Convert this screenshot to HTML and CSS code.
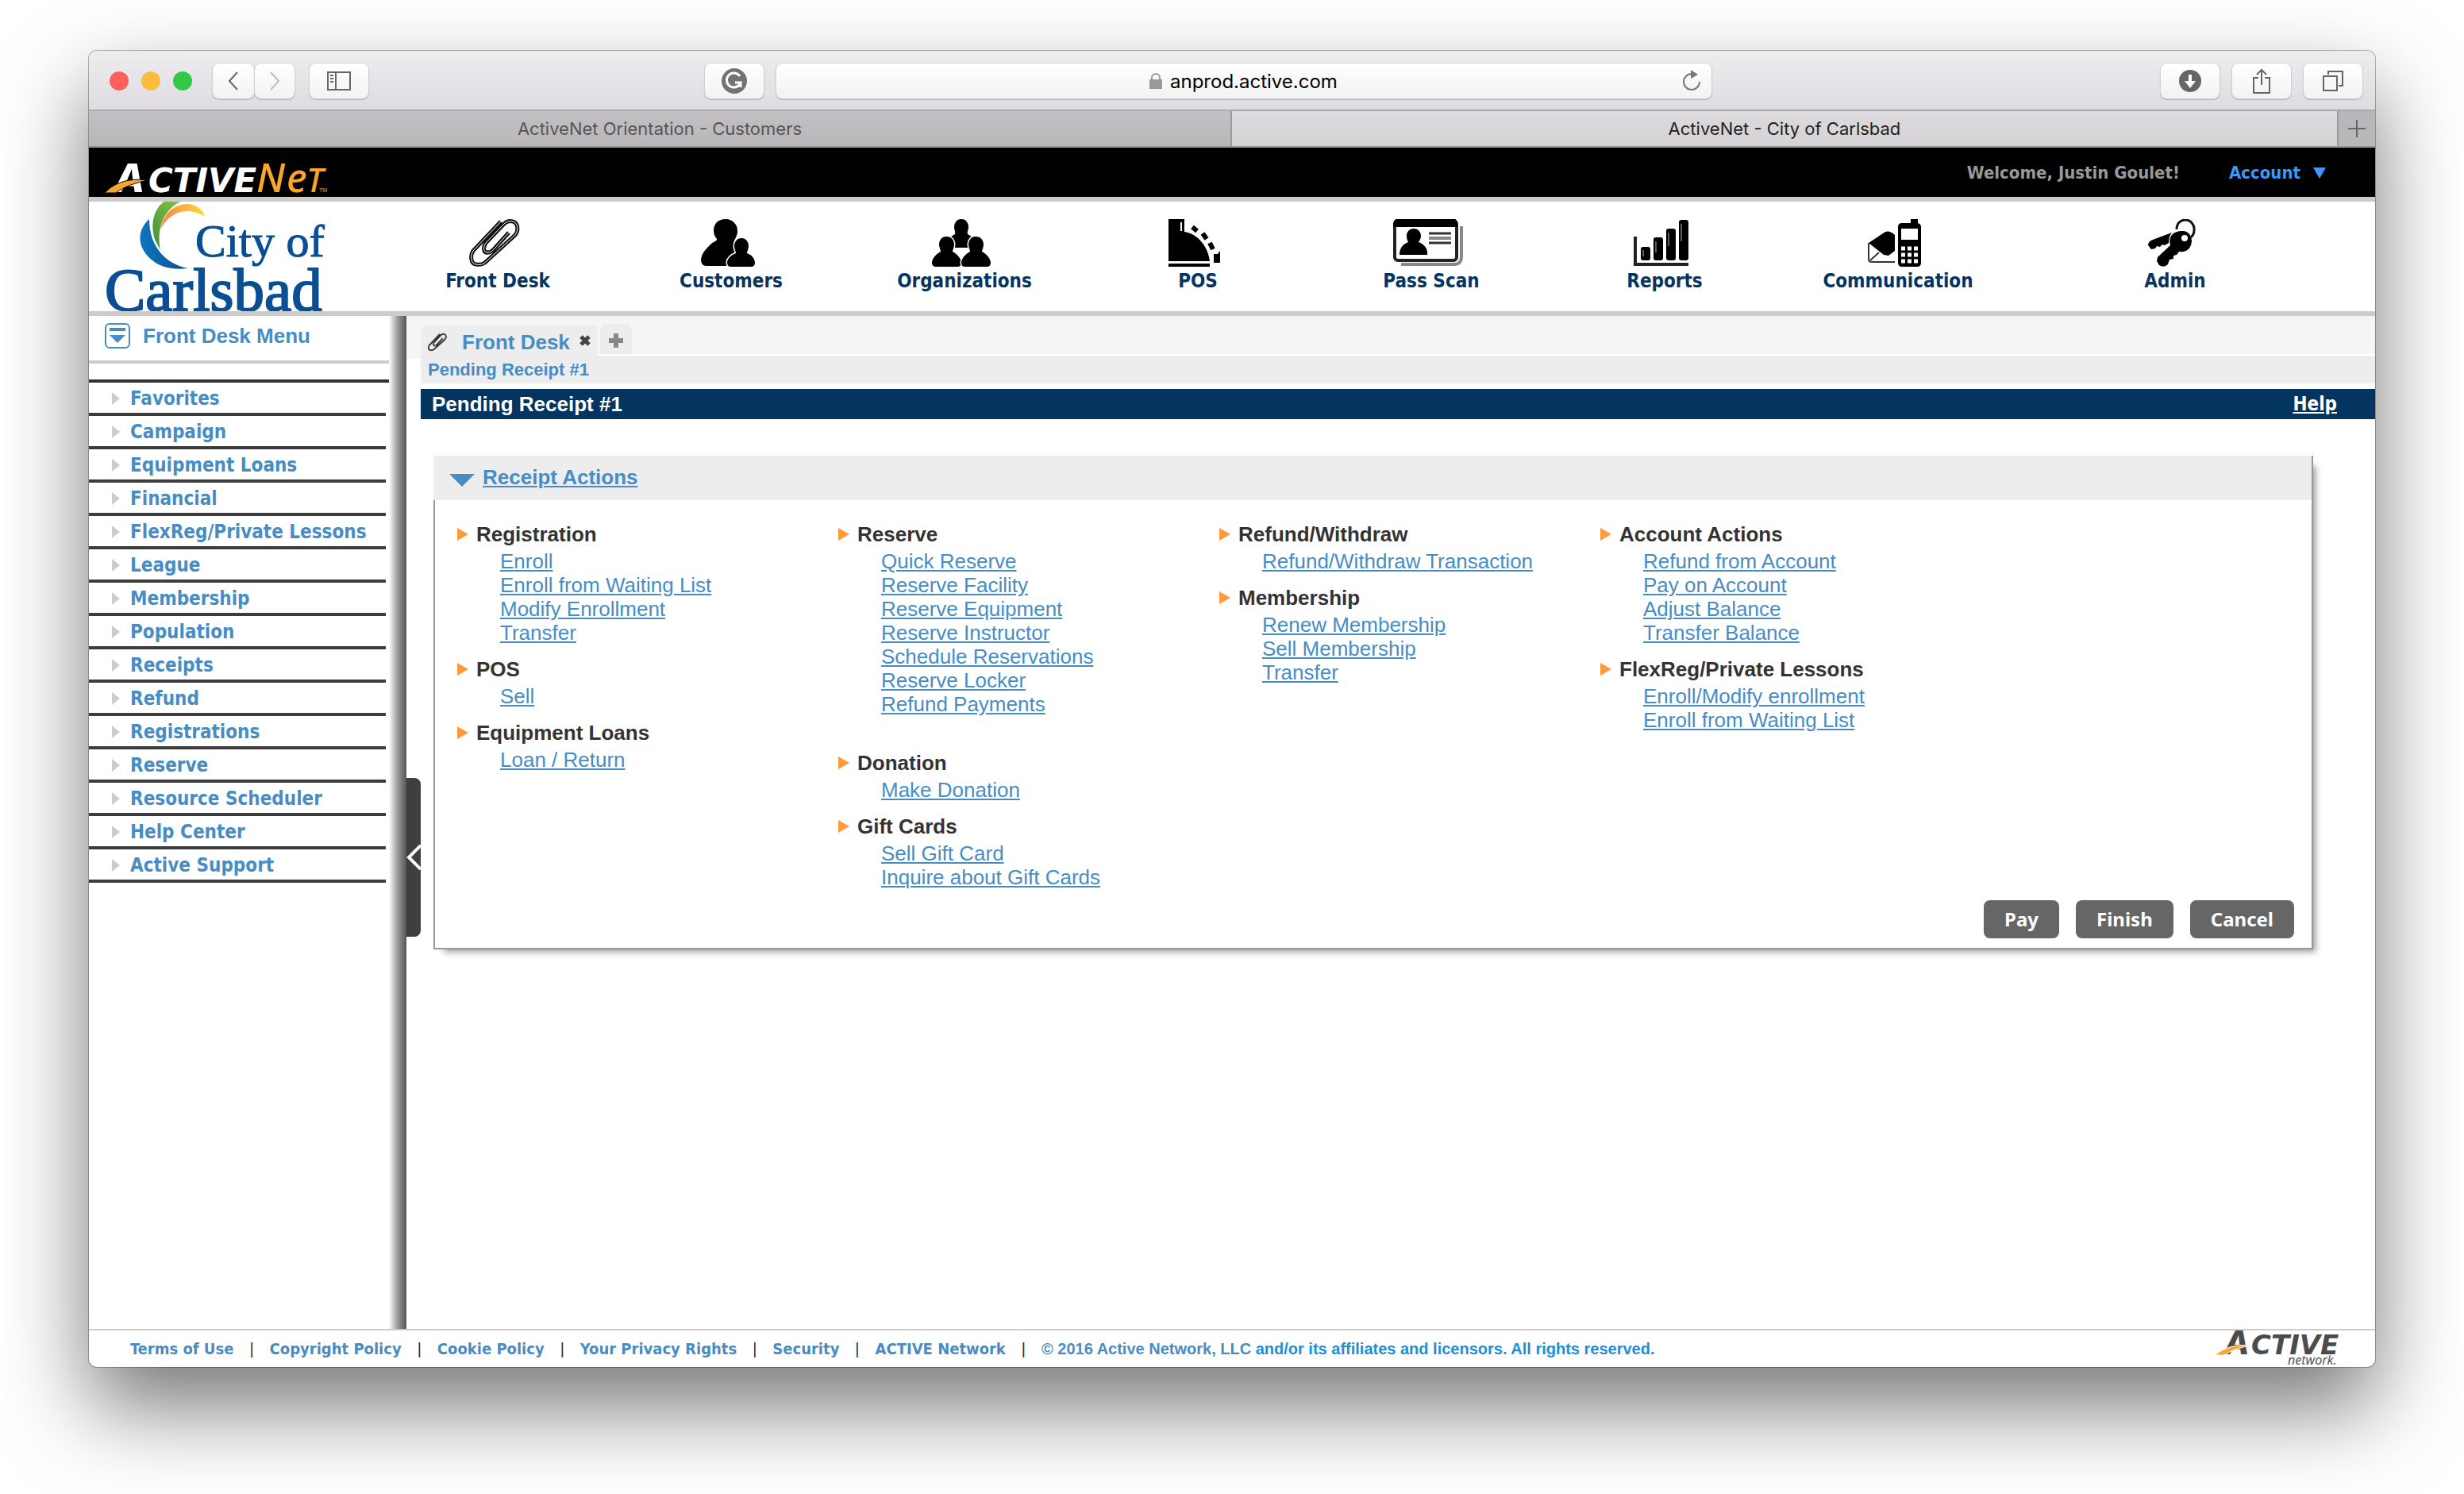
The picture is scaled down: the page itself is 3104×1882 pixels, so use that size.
FILE: index.html
```
<!DOCTYPE html>
<html lang="en">
<head>
<meta charset="utf-8">
<title>ActiveNet - City of Carlsbad</title>
<link rel="stylesheet" href="styles.css">
</head>
<body>
<svg class="defs" aria-hidden="true">
  <symbol id="clip" viewBox="0 0 64 60">
    <path d="M40 3 L5 40 C1 46 2 57 9 57 C15 58 18 57 22 53 L58 20 C63 14 61 4 55 3 C51 2 47 3 44 6 L21 30 C17 36 18 43 24 42 C27 42 29 40 31 38 L50 17" fill="none" stroke="#111" stroke-width="5"/>
    <path d="M40 3 L5 40 C1 46 2 57 9 57 C15 58 18 57 22 53 L58 20 C63 14 61 4 55 3 C51 2 47 3 44 6 L21 30 C17 36 18 43 24 42 C27 42 29 40 31 38 L50 17" fill="none" stroke="#fff" stroke-width="1"/>
  </symbol>
</svg>
<div class="window">
  <div class="toolbar">
    <div class="lights"><span class="light red"></span><span class="light amber"></span><span class="light green"></span></div>
    <div class="pair">
      <button class="tool back" aria-label="Back"><svg width="16" height="26" viewBox="0 0 16 26"><path d="M13 2 L3 13 L13 24" fill="none" stroke="#666" stroke-width="2"/></svg></button>
      <button class="tool fwd" aria-label="Forward"><svg width="16" height="26" viewBox="0 0 16 26"><path d="M3 2 L13 13 L3 24" fill="none" stroke="#bbb" stroke-width="2"/></svg></button>
    </div>
    <button class="tool wide" aria-label="Sidebar"><svg width="30" height="24" viewBox="0 0 30 24"><path d="M1 1H29V23H1ZM11 1V23M4 5H8M4 9H8M4 13H8" fill="none" stroke="#666" stroke-width="2"/></svg></button>
    <span class="space-left"></span>
    <button class="tool wide" aria-label="Extension"><svg width="32" height="32" viewBox="0 0 32 32"><circle cx="16" cy="16" r="16" fill="#737373"/><path d="M23 10 A9 9 0 1 0 24 18 H17 M24 18 V24" fill="none" stroke="#fff" stroke-width="3"/></svg></button>
    <div class="address">
      <svg width="16" height="20" viewBox="0 0 16 20"><path d="M0 8H16V20H0Z" fill="#999"/><path d="M3 9V6A5 5 0 0 1 13 6V9" fill="none" stroke="#999" stroke-width="2"/></svg>
      <input class="url" type="text" value="anprod.active.com" aria-label="Address">
      <button class="reload" aria-label="Reload"><svg width="26" height="28" viewBox="0 0 26 28"><path d="M13 5 A10 10 0 1 0 23 15" fill="none" stroke="#777" stroke-width="2"/><path d="M12 0 L21 6 L12 11Z" fill="#777"/></svg></button>
    </div>
    <span class="space-right"></span>
    <div class="tools">
      <button class="tool wide" aria-label="Downloads"><svg width="28" height="28" viewBox="0 0 28 28"><circle cx="14" cy="14" r="14" fill="#666"/><path d="M12 6H16V14H21L14 23L7 14H12Z" fill="#fff"/></svg></button>
      <button class="tool wide" aria-label="Share"><svg width="24" height="32" viewBox="0 0 24 32"><path d="M8 12H2V31H22V12H16M12 21V3M6 8L12 2L18 8" fill="none" stroke="#666" stroke-width="2"/></svg></button>
      <button class="tool wide" aria-label="Show all tabs"><svg width="26" height="26" viewBox="0 0 26 26"><path d="M1 7H18V25H1ZM7 5V1H25V19H20" fill="none" stroke="#666" stroke-width="2"/></svg></button>
    </div>
  </div>
  <div class="tabs">
    <button class="tab">ActiveNet Orientation - Customers</button>
    <button class="tab current">ActiveNet - City of Carlsbad</button>
    <button class="tab-add" aria-label="New tab"><svg width="22" height="22" viewBox="0 0 22 22"><path d="M11 0V22M0 11H22" stroke="#666" stroke-width="2"/></svg></button>
  </div>

  <header class="topbar">
    <svg class="brand" width="284" height="42" viewBox="0 0 284 42" role="img" aria-label="ActiveNet">
      <text x="12" y="39" class="brand-a">A</text>
      <text x="55" y="39" class="brand-bold">CTIVE</text>
      <text x="191" y="39" class="brand-net">N</text>
      <text x="229" y="39" class="brand-net">e</text>
      <text x="254" y="39" class="brand-t">T</text>
      <text x="270" y="39" class="brand-tm">TM</text>
      <path d="M0 40 C12 27 30 21 54 24 C40 27 24 32 14 40Z" fill="#f9a62b" stroke="#000" stroke-width="1"/>
    </svg>
    <span class="welcome">Welcome, Justin Goulet!</span>
    <a class="account" href="#">Account <svg width="16" height="14" viewBox="0 0 16 14"><path d="M0 0H16L8 14Z" fill="#3b99fc"/></svg></a>
  </header>

  <div class="mainnav">
    <svg class="city" width="278" height="138" viewBox="0 0 278 138" role="img" aria-label="City of Carlsbad">
      <defs>
        <linearGradient id="g1"><stop offset="0" stop-color="#0f75bd"/><stop offset="1" stop-color="#0a4f93"/></linearGradient>
        <linearGradient id="g2" x1="1" y1="0" x2="0" y2="1"><stop offset="0" stop-color="#86c34a"/><stop offset="1" stop-color="#3f9038"/></linearGradient>
        <linearGradient id="g3"><stop offset="0" stop-color="#f58450"/><stop offset="1" stop-color="#fddb2e"/></linearGradient>
      </defs>
      <path d="M56 22 C40 36 40 58 60 74 C72 84 88 86 105 84 C78 79 56 58 56 22Z" fill="url(#g1)"/>
      <path d="M75 0 C60 10 57 32 64 50 L70 61 C66 38 70 14 95 0Z" fill="url(#g2)"/>
      <path d="M70 35 C74 14 88 3 105 3 C116 4 124 10 126 19 C116 12 104 11 96 13 C84 16 76 24 70 35Z" fill="url(#g3)"/>
      <text x="114" y="69" class="city-of">City of</text>
      <text x="0" y="137" class="carlsbad">Carlsbad</text>
    </svg>
    <nav class="modules">
      <a class="module" href="#"><svg width="64" height="60"><use href="#clip"/></svg>Front Desk</a>
      <a class="module" href="#"><svg width="68" height="60" viewBox="0 0 68 60"><path d="M31 0C41 0 47 8 46 17C45 23 42 26 41 30C52 34 58 44 58 52V56Q58 59 53 59H6Q0 58 0 51C1 42 8 36 13 31C17 28 21 27 20 25C17 22 16 18 16 13C17 5 22 0 31 0Z"/><path d="M51 24C57 24 60 29 60 34C60 38 58 40 58 43C64 45 68 50 68 55Q68 60 63 60H38Q33 60 33 55C33 50 38 45 44 43C44 40 42 38 42 34C42 29 45 24 51 24Z" stroke="#fff" stroke-width="3" paint-order="stroke"/></svg>Customers</a>
      <a class="module" href="#"><svg width="74" height="60" viewBox="0 0 74 60"><path d="M37 0C43 0 46 5 46 10C46 14 44 16 45 19L50 22V36H24V22L29 19C30 16 28 14 28 10C28 5 31 0 37 0Z"/><g stroke="#fff" stroke-width="3" paint-order="stroke"><path id="p" d="M18 22C25 22 28 27 28 32C28 36 26 38 26 41C32 44 37 50 37 55Q37 60 32 60H5Q0 60 0 55C0 50 5 44 11 41C11 38 9 36 9 32C9 27 12 22 18 22Z"/><use href="#p" x="37"/></g></svg>Organizations</a>
      <a class="module" href="#"><svg width="66" height="60" viewBox="0 0 66 60"><path d="M0 0H20V16C36 18 50 34 52 53H0ZM0 56H52V60H0ZM57 44H62L65 40V55H57Z"/><path d="M16 4V15" stroke="#fff" stroke-width="2"/><path d="M30 10L36 15M43 18L48 25M52 30L56 38" stroke="#000" stroke-width="6"/></svg>POS</a>
      <a class="module" href="#"><svg width="88" height="60" viewBox="0 0 88 60"><path d="M10 57H78Q86 56 86 48V9" fill="none" stroke="#888" stroke-width="4"/><rect x="2" y="2" width="78" height="50" rx="4" fill="#fff" stroke="#222" stroke-width="4"/><path d="M4 0H78Q81 1 81 10H0Q0 0 4 0ZM26 12C32 12 35 17 35 21C35 25 33 27 32 29C40 32 44 38 43 45H8C8 38 11 32 19 29C18 27 17 25 17 21C17 17 20 12 26 12Z"/><path d="M45 18H73M45 30H73" stroke="#333" stroke-width="3"/><path d="M45 24H73" stroke="#888" stroke-width="4"/></svg>Pass Scan</a>
      <a class="module" href="#"><svg width="70" height="60" viewBox="0 0 70 60"><path d="M2 22V57H69" fill="none" stroke="#222" stroke-width="4"/><rect x="9" y="35" width="12" height="17" rx="3"/><rect x="25" y="23" width="12" height="29" rx="3"/><rect x="41" y="12" width="12" height="40" rx="3"/><rect x="57" y="1" width="12" height="51" rx="3"/><path d="M12 39V47M28 28V42M44 17V34M60 6V28" stroke="#bbb" stroke-width="1"/></svg>Reports</a>
      <a class="module" href="#"><svg width="68" height="60" viewBox="0 0 68 60"><path d="M1 30L22 16Q28 14 34 20V40L26 46L20 45Z"/><path d="M1 30V51Q1 54 5 54H34M3 52L14 42" fill="none" stroke="#333" stroke-width="2"/><path d="M54 0H63V5Q67 6 67 10V55Q67 60 62 60H43Q38 60 38 55V10Q38 5 43 5H54Z"/><path d="M42 12H63V26H42Z" fill="#fff"/><path d="M42 37H64M42 45H64M42 53H64" stroke="#fff" stroke-width="5" stroke-dasharray="5 3"/></svg>Communication</a>
      <a class="module" href="#"><svg width="60" height="60" viewBox="0 0 60 60"><path d="M36 13C36 5 41 1 47 1C54 1 59 8 58 14C58 18 56 22 52 24" fill="none" stroke="#111" stroke-width="3"/><path d="M42 15C50 14 55 20 55 28C54 37 49 42 39 41L36 45L32 46V50L27 51L25 57Q20 62 14 58L11 53L12 48L28 33C25 22 32 15 42 15ZM30 17L6 26Q0 28 0 33L4 38L9 37L11 34L15 35L18 32L21 33L26 30Q26 22 30 17Z"/><circle cx="46" cy="24" r="4" fill="#fff"/></svg>Admin</a>
    </nav>
  </div>

  <div class="content">
    <aside class="sidebar">
      <h2 class="menu-title"><svg width="32" height="32" viewBox="0 0 32 32"><rect x="1" y="1" width="30" height="30" rx="5" fill="#fff" stroke="#478dc4" stroke-width="2"/><path d="M6 6H26V10H6ZM6 15H26L16 25Z" fill="#478dc4"/></svg>Front Desk Menu</h2>
      <ul class="menu">
        <li><a href="#">Favorites</a></li>
        <li><a href="#">Campaign</a></li>
        <li><a href="#">Equipment Loans</a></li>
        <li><a href="#">Financial</a></li>
        <li><a href="#">FlexReg/Private Lessons</a></li>
        <li><a href="#">League</a></li>
        <li><a href="#">Membership</a></li>
        <li><a href="#">Population</a></li>
        <li><a href="#">Receipts</a></li>
        <li><a href="#">Refund</a></li>
        <li><a href="#">Registrations</a></li>
        <li><a href="#">Reserve</a></li>
        <li><a href="#">Resource Scheduler</a></li>
        <li><a href="#">Help Center</a></li>
        <li><a href="#">Active Support</a></li>
      </ul>
    </aside>
    <div class="divider"></div>
    <main class="workspace">
      <button class="collapse" aria-label="Collapse menu"><svg width="18" height="32" viewBox="0 0 18 32"><path d="M18 1L3 16L18 31" fill="none" stroke="#fff" stroke-width="4"/></svg></button>
      <div class="worktabs">
        <div class="worktab"><svg width="24" height="24"><use href="#clip"/></svg><a href="#">Front Desk</a><button class="close" aria-label="Close tab"><svg width="14" height="14" viewBox="0 0 14 14"><path d="M2 2L12 12M12 2L2 12" stroke="#444" stroke-width="5"/></svg></button></div>
        <button class="worktab-add" aria-label="Add tab"><svg width="18" height="18" viewBox="0 0 18 18"><path d="M9 0V18M0 9H18" stroke="#888" stroke-width="6"/></svg></button>
      </div>
      <div class="crumb"><a href="#">Pending Receipt #1</a></div>
      <div class="titlebar"><h1>Pending Receipt #1</h1><a class="help" href="#">Help</a></div>
      <section class="panel">
        <div class="panel-head"><svg width="32" height="16" viewBox="0 0 32 16"><path d="M0 0H32L16 16Z" fill="#478dc4"/></svg><a href="#">Receipt Actions</a></div>
        <div class="columns">
          <div class="column">
            <div class="group"><h3>Registration</h3><a href="#">Enroll</a><a href="#">Enroll from Waiting List</a><a href="#">Modify Enrollment</a><a href="#">Transfer</a></div>
            <div class="group"><h3>POS</h3><a href="#">Sell</a></div>
            <div class="group"><h3>Equipment Loans</h3><a href="#">Loan / Return</a></div>
          </div>
          <div class="column">
            <div class="group spaced"><h3>Reserve</h3><a href="#">Quick Reserve</a><a href="#">Reserve Facility</a><a href="#">Reserve Equipment</a><a href="#">Reserve Instructor</a><a href="#">Schedule Reservations</a><a href="#">Reserve Locker</a><a href="#">Refund Payments</a></div>
            <div class="group"><h3>Donation</h3><a href="#">Make Donation</a></div>
            <div class="group"><h3>Gift Cards</h3><a href="#">Sell Gift Card</a><a href="#">Inquire about Gift Cards</a></div>
          </div>
          <div class="column">
            <div class="group"><h3>Refund/Withdraw</h3><a href="#">Refund/Withdraw Transaction</a></div>
            <div class="group"><h3>Membership</h3><a href="#">Renew Membership</a><a href="#">Sell Membership</a><a href="#">Transfer</a></div>
          </div>
          <div class="column">
            <div class="group"><h3>Account Actions</h3><a href="#">Refund from Account</a><a href="#">Pay on Account</a><a href="#">Adjust Balance</a><a href="#">Transfer Balance</a></div>
            <div class="group"><h3>FlexReg/Private Lessons</h3><a href="#">Enroll/Modify enrollment</a><a href="#">Enroll from Waiting List</a></div>
          </div>
        </div>
        <div class="actions"><button class="action">Pay</button><button class="action">Finish</button><button class="action">Cancel</button></div>
      </section>
    </main>
  </div>

  <footer class="footer">
    <nav class="legal">
      <a href="#">Terms of Use</a><span>|</span><a href="#">Copyright Policy</a><span>|</span><a href="#">Cookie Policy</a><span>|</span><a href="#">Your Privacy Rights</a><span>|</span><a href="#">Security</a><span>|</span><a href="#">ACTIVE Network</a><span>|</span>
      <p class="copy"><a href="#">© 2016 Active Network, LLC</a> and/or its affiliates and licensors. All rights reserved.</p>
    </nav>
    <svg width="160" height="46" viewBox="0 0 160 46" role="img" aria-label="Active network">
      <text x="12" y="30" class="foot-a">A</text>
      <text x="46" y="30" class="foot-bold">CTIVE</text>
      <text x="92" y="43" class="foot-net">network.</text>
      <path d="M0 31 C12 22 26 17 44 19 C30 22 20 26 12 31Z" fill="#f9a62b" stroke="#fff" stroke-width="1"/>
    </svg>
  </footer>
</div>
</body>
</html>
```
FILE: styles.css
```
* { box-sizing: border-box; }
body {
  margin: 0;
  min-height: 100vh;
  padding: 64px 112px 160px;
  background: #fff;
  font: 26px/30px "Liberation Sans", Arial, sans-serif;
  color: #333;
  display: flex;
}
h1, h2, h3, p, ul { margin: 0; padding: 0; font-size: inherit; font-weight: inherit; }
a { color: #478dc4; }
button { margin: 0; padding: 0; border: 0; background: none; font: inherit; color: inherit; }
svg { display: block; flex: none; }
.defs { position: absolute; width: 0; height: 0; }

.window {
  flex: 1;
  min-width: 0;
  display: flex;
  flex-direction: column;
  background: #fff;
  border-radius: 10px;
  overflow: hidden;
  box-shadow: 0 0 0 1px rgba(0, 0, 0, .28), 0 50px 110px rgba(0, 0, 0, .54);
}

/* Browser chrome */
.toolbar {
  height: 76px;
  padding: 2px 16px 0 26px;
  display: flex;
  align-items: center;
  background: linear-gradient(#eeecef, #dedce0);
  border-bottom: 2px solid #aaa8ab;
}
.lights { display: flex; gap: 16px; margin-right: 26px; }
.light { width: 24px; height: 24px; border-radius: 50%; }
.red { background: #fc605c; }
.amber { background: #fdbc40; }
.green { background: #34c84a; }
.pair { display: flex; gap: 1px; margin-right: 19px; }
.tool {
  height: 44px;
  width: 50px;
  display: grid;
  place-items: center;
  background: linear-gradient(#fff, #f2f2f2);
  border-radius: 8px;
  box-shadow: 0 0 0 1px #d2d0d3, 0 1px 1px 1px #b4b2b5;
}
.back { width: 52px; }
.wide { width: 74px; }
.space-left { flex: 424; }
.space-right { flex: 566; }
.tools { display: flex; gap: 16px; }
.address {
  flex: 1178;
  height: 44px;
  margin-left: 16px;
  display: flex;
  align-items: center;
  justify-content: center;
  gap: 10px;
  position: relative;
  background: linear-gradient(#fff, #f2f2f2);
  border-radius: 8px;
  box-shadow: 0 0 0 1px #d2d0d3, 0 1px 1px 1px #b4b2b5;
}
.url { width: 212px; padding: 2px 0 0; border: 0; background: none; font: 24px/30px Inter, sans-serif; color: #000; }
.reload { position: absolute; right: 12px; top: 8px; }
.tabs { display: flex; height: 46px; border-bottom: 2px solid #999; font: 22px/30px Inter, sans-serif; }
.tab { flex: 1440; background: linear-gradient(#c2c0c3, #b8b6b9); color: #555; border-right: 2px solid #9b999c; }
.tab.current { flex: 1394; background: linear-gradient(#dddbde, #d4d2d5); color: #222; }
.tab-add { width: 46px; display: grid; place-items: center; background: #b9b7ba; }

/* Product bar */
.topbar {
  display: flex;
  align-items: center;
  height: 68px;
  padding: 2px 62px 0 20px;
  background: #000;
  border-bottom: 6px solid #ccc;
  font: bold 22px/30px "DejaVu Sans Condensed", "DejaVu Sans", sans-serif;
}
.brand { margin-top: 12px; overflow: visible; }
.brand text { fill: #fff; }
.brand .brand-a { font: italic 800 50px Inter, sans-serif; }
.brand .brand-bold { font: italic bold 42px "DejaVu Sans", sans-serif; }
.brand .brand-net { font: italic 500 50px "Noto Sans", sans-serif; fill: #f9a62b; }
.brand .brand-t { font: italic 500 42px "Noto Sans", sans-serif; fill: #f9a62b; }
.brand .brand-tm { font: 7px "Liberation Sans", sans-serif; fill: #f9a62b; }
.welcome { margin-left: auto; color: #999; }
.account { margin-left: 62px; display: flex; align-items: center; gap: 16px; color: #3b99fc; text-decoration: none; }
.mainnav { display: flex; height: 144px; padding: 0 50px 0 20px; border-bottom: 6px solid #ccc; }
.city-of { font: 58px "Liberation Serif", serif; fill: #0a4f93; stroke: #0a4f93; }
.carlsbad { font: 77px "Liberation Serif", serif; fill: #0a4f93; stroke: #0a4f93; stroke-width: 2px; }
.modules { flex: 1; margin-left: 70px; display: grid; grid-template-columns: repeat(7, 294fr) 404fr; }
.module {
  display: flex;
  flex-direction: column;
  align-items: center;
  gap: 3px;
  padding-top: 22px;
  color: #043560;
  font: bold 24px/30px "DejaVu Sans Condensed", "DejaVu Sans", sans-serif;
  text-decoration: none;
}
.module svg { margin-right: 8px; fill: #000; }

/* Sidebar */
.content { flex: 1; display: flex; }
.sidebar { width: 378px; }
.menu-title {
  height: 60px;
  padding: 0 0 6px 20px;
  display: flex;
  align-items: center;
  gap: 16px;
  border-bottom: 4px solid #ccc;
  color: #478dc4;
  font-weight: bold;
}
.menu { list-style: none; margin-top: 20px; border-top: 4px solid #333; font: bold 24px/36px "DejaVu Sans Condensed", "DejaVu Sans", sans-serif; }
.menu li { margin-right: 4px; padding-top: 2px; border-bottom: 4px solid #3c3c3c; }
.menu a { display: flex; align-items: center; gap: 13px; padding-left: 29px; text-decoration: none; }
.menu a::before { content: ""; border-left: 10px solid #ccc; border-top: 8px solid transparent; border-bottom: 8px solid transparent; }
.divider { width: 22px; background: linear-gradient(90deg, #fff, #999 50%, #555); }

/* Workspace */
.workspace { flex: 1; min-width: 0; position: relative; padding-left: 18px; background: linear-gradient(#f5f5f5 54px, #fff 54px); }
.collapse { position: absolute; left: 0; top: calc(50% - 56px); width: 18px; height: 200px; display: flex; align-items: center; background: #3f3f3f; border-radius: 0 8px 8px 0; }
.worktabs { display: flex; align-items: flex-end; gap: 4px; height: 50px; background: linear-gradient(#f5f5f5 48px, #fff 48px); }
.worktab { height: 38px; width: 222px; padding: 4px 8px 0 9px; display: flex; align-items: center; background: #ededed; border-radius: 8px 0 0 0; font-weight: bold; }
.worktab a { margin: 0 auto 0 19px; text-decoration: none; }
.close { margin-bottom: 4px; }
.worktab-add { width: 40px; height: 38px; padding-top: 4px; margin-bottom: 2px; display: grid; place-items: center; background: #ededed; border-radius: 8px 8px 0 0; }
.crumb { height: 36px; padding-left: 9px; background: #ededed; border-bottom: 2px solid #f5f5f5; font: bold 22px/36px "Liberation Sans", Arial, sans-serif; }
.crumb a { text-decoration: none; }
.titlebar { display: flex; justify-content: space-between; align-items: center; height: 44px; padding: 0 48px 0 14px; border-top: 6px solid #fff; background: #043560; background-clip: padding-box; color: #fff; font-weight: bold; }
.help { color: #fff; font: bold 24px/30px "DejaVu Sans Condensed", "DejaVu Sans", sans-serif; }
.panel { margin: 46px 78px 0 16px; border: 2px solid #999; border-top: 0; background: #fff; box-shadow: 8px 8px 8px -5px #999; }
.panel-head { display: flex; align-items: center; gap: 10px; height: 56px; margin-left: -2px; padding: 0 20px 2px; background: #ededed; font-weight: bold; }
.panel-head svg { margin-top: 8px; }
.columns { display: flex; padding: 28px 0 14px 28px; }
.column { flex: 0 1 480px; display: flex; flex-direction: column; gap: 16px; }
.group { display: flex; flex-direction: column; align-items: flex-start; padding-left: 54px; }
.group h3 { margin: 0 0 4px -54px; display: flex; align-items: center; gap: 10px; font-weight: bold; }
.group h3::before { content: ""; border-left: 14px solid #ff9a3c; border-top: 8px solid transparent; border-bottom: 8px solid transparent; }
.spaced { padding-bottom: 28px; }
.actions { display: flex; justify-content: flex-end; gap: 21px; padding: 0 22px 12px; }
.action { height: 48px; padding: 0 26px; background: #666; color: #fff; border-radius: 8px; font: bold 24px/30px "Noto Sans", sans-serif; }

/* Footer */
.footer { height: 48px; display: flex; justify-content: space-between; padding: 0 42px 0 52px; border-top: 2px solid #ccc; }
.legal { display: flex; align-items: center; gap: 20px; font: bold 20px/30px "DejaVu Sans Condensed", "DejaVu Sans", sans-serif; }
.legal a { text-decoration: none; }
.legal span { font-family: "Liberation Sans", sans-serif; font-weight: normal; }
.copy { color: #1c8fd6; font: bold 20px/30px "Liberation Sans", Arial, sans-serif; }
.foot-a { font: italic 800 41px Inter, sans-serif; fill: #4a4b4d; }
.foot-bold { font: italic bold 34px "DejaVu Sans", sans-serif; fill: #4a4b4d; }
.foot-net { font: italic 16px "Noto Sans", sans-serif; fill: #555; }
```
